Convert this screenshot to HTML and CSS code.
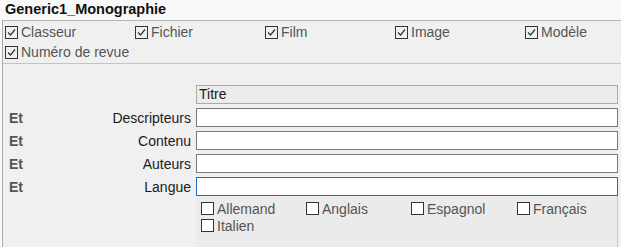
FILE: index.html
```html
<!DOCTYPE html>
<html lang="fr">
<head>
    <meta charset="UTF-8">
    <title>Generic1_Monographie</title>
    <link rel="stylesheet" href="styles.css">
</head>
<body>
    <div class="panel-title">Generic1_Monographie</div>
    <div class="panel">
        <div class="types">
            <label class="check"><svg class="box" viewBox="0 0 13 13"><rect x="0.5" y="0.5" width="12" height="12"/><path d="M3 6.5 5.5 9 10 3.5"/></svg>Classeur</label>
            <label class="check"><svg class="box" viewBox="0 0 13 13"><rect x="0.5" y="0.5" width="12" height="12"/><path d="M3 6.5 5.5 9 10 3.5"/></svg>Fichier</label>
            <label class="check"><svg class="box" viewBox="0 0 13 13"><rect x="0.5" y="0.5" width="12" height="12"/><path d="M3 6.5 5.5 9 10 3.5"/></svg>Film</label>
            <label class="check"><svg class="box" viewBox="0 0 13 13"><rect x="0.5" y="0.5" width="12" height="12"/><path d="M3 6.5 5.5 9 10 3.5"/></svg>Image</label>
            <label class="check"><svg class="box" viewBox="0 0 13 13"><rect x="0.5" y="0.5" width="12" height="12"/><path d="M3 6.5 5.5 9 10 3.5"/></svg>Modèle</label>
            <label class="check"><svg class="box" viewBox="0 0 13 13"><rect x="0.5" y="0.5" width="12" height="12"/><path d="M3 6.5 5.5 9 10 3.5"/></svg>Numéro de revue</label>
        </div>

        <div class="search">
            <div class="row">
                <div class="label-cell"></div>
                <div class="field-head">Titre</div>
            </div>
            <div class="row">
                <div class="label-cell"><span class="op">Et</span><span class="name">Descripteurs</span></div>
                <input class="field" type="text">
            </div>
            <div class="row">
                <div class="label-cell"><span class="op">Et</span><span class="name">Contenu</span></div>
                <input class="field" type="text">
            </div>
            <div class="row">
                <div class="label-cell"><span class="op">Et</span><span class="name">Auteurs</span></div>
                <input class="field" type="text">
            </div>
            <div class="row last">
                <div class="label-cell"><span class="op">Et</span><span class="name">Langue</span></div>
                <input class="field active" type="text">
            </div>
            <div class="row">
                <div class="label-cell"></div>
                <div class="langs">
                    <label class="check"><svg class="box" viewBox="0 0 13 13"><rect x="0.5" y="0.5" width="12" height="12"/></svg>Allemand</label>
                    <label class="check"><svg class="box" viewBox="0 0 13 13"><rect x="0.5" y="0.5" width="12" height="12"/></svg>Anglais</label>
                    <label class="check"><svg class="box" viewBox="0 0 13 13"><rect x="0.5" y="0.5" width="12" height="12"/></svg>Espagnol</label>
                    <label class="check"><svg class="box" viewBox="0 0 13 13"><rect x="0.5" y="0.5" width="12" height="12"/></svg>Français</label>
                    <label class="check"><svg class="box" viewBox="0 0 13 13"><rect x="0.5" y="0.5" width="12" height="12"/></svg>Italien</label>
                </div>
            </div>
        </div>
    </div>
</body>
</html>
```

FILE: styles.css
```css
body {
    margin: 0;
    font-family: "Liberation Sans", Arial, sans-serif;
    font-size: 14px;
    background-color: #f9f9f9;
    height: 247px;
    overflow: hidden;
}
.panel-title {
    height: 20px;
    line-height: 19px;
    padding-left: 5px;
    font-weight: bold;
    font-size: 14.5px;
    color: #111;
}
.panel {
    border-top: 1px solid #b4b4b4;
    margin-left: 2px;
    border-left: 1px solid #aaa;
    background-color: #f0f0f0;
    height: 226px;
}
.types {
    display: grid;
    grid-template-columns: repeat(4, 130px) 1fr;
    grid-auto-rows: 20px;
    padding: 1px 0 1px 2px;
    border-bottom: 1px solid #c4c4c4;
}
.check {
    display: flex;
    align-items: center;
    gap: 3px;
    color: #555;
    white-space: nowrap;
}
.box {
    width: 13px;
    height: 13px;
    flex: none;
}
.box rect {
    fill: #fff;
    stroke: #333;
    stroke-width: 1;
}
.types .box rect {
    fill: none;
}
.box path {
    fill: none;
    stroke: #333;
    stroke-width: 1.2;
}
.search {
    padding-top: 21px;
}
.row {
    display: grid;
    grid-template-columns: 188px 422px;
    column-gap: 5px;
    margin-bottom: 4px;
}
.row.last {
    margin-bottom: 0;
}
.label-cell {
    display: flex;
    justify-content: space-between;
    align-items: center;
    padding-left: 6px;
}
.op {
    font-weight: bold;
    color: #555;
}
.name {
    color: #1a1a1a;
}
.field-head {
    height: 19px;
    box-sizing: border-box;
    border: 1px solid #aaa;
    background-color: #ececec;
    line-height: 17px;
    padding-left: 2px;
    color: #1a1a1a;
}
.field {
    height: 19px;
    box-sizing: border-box;
    border: 1px solid #7a7a7a;
    background-color: #fff;
    margin: 0;
    padding: 0 2px;
    font: inherit;
    outline: none;
}
.field.active {
    border-color: #1c6fc1;
}
.langs {
    display: grid;
    grid-template-columns: 105px 105px 106px 1fr;
    grid-auto-rows: 17px;
    background-color: #ebebeb;
    border-right: 1px solid #c8c8c8;
    padding: 4px 0 0 5px;
    height: 51px;
    box-sizing: border-box;
    overflow: hidden;
}
```
